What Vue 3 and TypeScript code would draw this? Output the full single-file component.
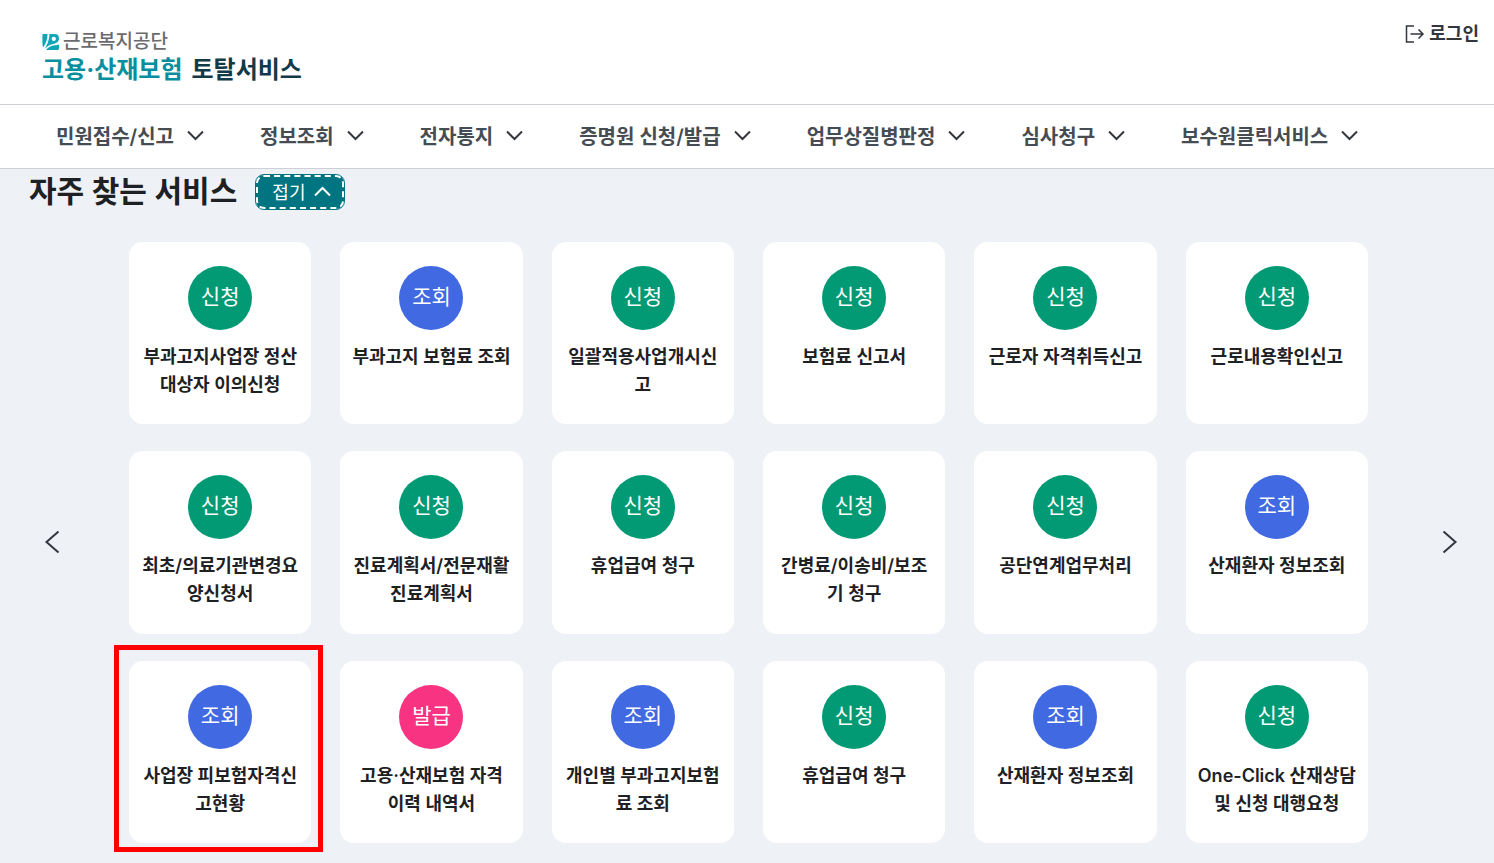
<script setup lang="ts">
import { ref } from 'vue'

type Kind = 'apply' | 'view' | 'issue'

interface Service {
  kind: Kind
  lines: string[]
  marked?: boolean
}

const kindLabels: Record<Kind, string> = { apply: '신청', view: '조회', issue: '발급' }

const menus: string[] = [
  '민원접수/신고',
  '정보조회',
  '전자통지',
  '증명원 신청/발급',
  '업무상질병판정',
  '심사청구',
  '보수원클릭서비스',
]

const services: Service[] = [
  { kind: 'apply', lines: ['부과고지사업장 정산', '대상자 이의신청'] },
  { kind: 'view', lines: ['부과고지 보험료 조회'] },
  { kind: 'apply', lines: ['일괄적용사업개시신', '고'] },
  { kind: 'apply', lines: ['보험료 신고서'] },
  { kind: 'apply', lines: ['근로자 자격취득신고'] },
  { kind: 'apply', lines: ['근로내용확인신고'] },
  { kind: 'apply', lines: ['최초/의료기관변경요', '양신청서'] },
  { kind: 'apply', lines: ['진료계획서/전문재활', '진료계획서'] },
  { kind: 'apply', lines: ['휴업급여 청구'] },
  { kind: 'apply', lines: ['간병료/이송비/보조', '기 청구'] },
  { kind: 'apply', lines: ['공단연계업무처리'] },
  { kind: 'view', lines: ['산재환자 정보조회'] },
  { kind: 'view', lines: ['사업장 피보험자격신', '고현황'], marked: true },
  { kind: 'issue', lines: ['고용·산재보험 자격', '이력 내역서'] },
  { kind: 'view', lines: ['개인별 부과고지보험', '료 조회'] },
  { kind: 'apply', lines: ['휴업급여 청구'] },
  { kind: 'view', lines: ['산재환자 정보조회'] },
  { kind: 'apply', lines: ['One-Click 산재상담', '및 신청 대행요청'] },
]

const open = ref(true)
</script>

<template>
  <div class="page">
    <header class="header">
      <a class="logo" href="#">
        <span class="agency">
          <svg class="mark" viewBox="0 0 18 18" aria-hidden="true">
            <path d="M.5 1H5.500C5.500 6 4 10.500 1 14.500C.3 12 .3 5 .5 1z" />
            <path fill-rule="evenodd" d="M7.500 1H13c2.800 0 4 2 4 4.300c0 3.500-2.500 5.200-6 5.700c-3.300.6-6 2.300-8.500 5C5.500 11.500 7.300 7 7.500 1zM11.800 3.800a2.100 2.100 0 1 0 .01 0z" />
            <path d="M4 17c2.500-3 5.500-4.500 8.500-4.700c2 0 3.500-.3 4.500-.8V15c0 1.500-.5 2-2 2z" />
          </svg>
          <span>근로복지공단</span>
        </span>
        <span class="brand">
          <span class="brand-main">고용·산재보험</span>
          <span>토탈서비스</span>
        </span>
      </a>
      <a class="login" href="#">
        <svg class="login-icon" viewBox="0 0 20 18" aria-hidden="true">
          <path d="M9 1H1.500v16H9M5.500 9H18M13.500 4.500L18 9l-4.500 4.500" />
        </svg>
        로그인
      </a>
    </header>

    <nav class="nav" aria-label="주 메뉴">
      <button v-for="menu in menus" :key="menu" class="menu" type="button">
        {{ menu }}
        <svg class="chevron" viewBox="0 0 17 11" aria-hidden="true"><path d="M1 1.500l7.500 7.500L16 1.500" /></svg>
      </button>
    </nav>

    <main class="main">
      <div class="heading">
        <h1 class="title">자주 찾는 서비스</h1>
        <button class="toggle" type="button" :aria-expanded="open" @click="open = !open">
          {{ open ? '접기' : '펼치기' }}
          <svg class="chevron" :class="{ down: !open }" viewBox="0 0 17 11" aria-hidden="true"><path d="M1 9.500L8.500 2L16 9.500" /></svg>
        </button>
      </div>

      <div v-if="open" class="carousel">
        <button class="arrow" type="button" aria-label="이전">
          <svg viewBox="0 0 16 24" aria-hidden="true"><path d="M14.500 1.500L2.500 12l12 10.500" /></svg>
        </button>
        <ul class="grid">
          <li v-for="(service, i) in services" :key="i" class="cell">
            <a class="card" href="#">
              <span class="badge" :class="service.kind">{{ kindLabels[service.kind] }}</span>
              <span class="name">
                <span v-for="line in service.lines" :key="line" class="line">{{ line }}</span>
              </span>
            </a>
            <span v-if="service.marked" class="marker"></span>
          </li>
        </ul>
        <button class="arrow" type="button" aria-label="다음">
          <svg viewBox="0 0 16 24" aria-hidden="true"><path d="M1.500 1.500L13.500 12L1.500 22.500" /></svg>
        </button>
      </div>
    </main>
  </div>
</template>

<style>
body {
  margin: 0;
  background: #eef1f6;
}
</style>

<style scoped>
.page {
  min-height: 100vh;
  box-sizing: border-box;
  font-family: Inter, "Noto Sans CJK KR", sans-serif;
  color: #1e2124;
}

a {
  color: inherit;
  text-decoration: none;
}

button {
  font: inherit;
  color: inherit;
  background: none;
  border: 0;
  padding: 0;
  cursor: pointer;
}

svg {
  display: block;
  flex: none;
}

.header {
  display: flex;
  justify-content: space-between;
  align-items: flex-start;
  height: 104px;
  box-sizing: border-box;
  padding: 21px 15px 0 42px;
  background: #fff;
}

.logo {
  display: flex;
  flex-direction: column;
  padding-top: 8px;
}

.agency {
  display: flex;
  align-items: center;
  gap: 3px;
  font-size: 19px;
  line-height: 26px;
  font-weight: 500;
  color: #6b6b6e;
}

.mark {
  width: 18px;
  height: 18px;
  fill: #12a5b5;
}

.brand {
  display: flex;
  gap: 9px;
  font-size: 24px;
  line-height: 30px;
  font-weight: 700;
  color: #123a47;
}

.brand-main {
  color: #088e9e;
}

.login {
  display: flex;
  align-items: center;
  gap: 4px;
  font-size: 18px;
  line-height: 26px;
  font-weight: 600;
  color: #33363d;
}

.login-icon {
  width: 20px;
  height: 18px;
}

.login-icon path,
.chevron path,
.arrow path {
  fill: none;
  stroke: #33363d;
  stroke-width: 2;
}

.login-icon path {
  stroke-width: 1.5;
}

.nav {
  display: flex;
  gap: 56px;
  height: 65px;
  box-sizing: border-box;
  padding: 0 0 2px 56px;
  background: #fff;
  border-top: 1px solid #cdd1d5;
  border-bottom: 1px solid #cdd1d5;
}

.menu {
  display: flex;
  align-items: center;
  gap: 13px;
  font-size: 20px;
  font-weight: 600;
  white-space: nowrap;
  color: #464c53;
}

.chevron {
  width: 17px;
  height: 11px;
}

.chevron.down {
  transform: rotate(180deg);
}

.heading {
  display: flex;
  align-items: center;
  gap: 19px;
  padding: 1px 29px 0;
}

.title {
  margin: 0;
  padding-bottom: 2px;
  font-size: 30px;
  line-height: 42px;
  font-weight: 600;
}

.toggle {
  display: flex;
  align-items: center;
  gap: 9px;
  height: 34px;
  padding: 0 11px 2px 14px;
  border: 2px dashed #fff;
  border-radius: 8px;
  outline: 1px solid #007582;
  background: #007582;
  font-size: 18px;
  color: #fff;
}

.toggle .chevron path {
  stroke: #fff;
}

.carousel {
  display: flex;
  align-items: center;
  padding: 28px 28px 20px 36px;
}

.arrow {
  display: flex;
  justify-content: center;
  flex: none;
  width: 32px;
  padding: 8px 0 10px;
}

.arrow svg {
  width: 16px;
  height: 24px;
}

.grid {
  flex: 1;
  display: grid;
  grid-template-columns: repeat(6, minmax(0, 1fr));
  gap: 27px 29px;
  margin: 0 66px 0 61px;
  padding: 0;
  list-style: none;
}

.cell {
  position: relative;
}

.card {
  display: flex;
  flex-direction: column;
  align-items: center;
  gap: 13px;
  aspect-ratio: 1;
  box-sizing: border-box;
  padding-top: 24px;
  border-radius: 14px;
  background: #fff;
}

.badge {
  width: 64px;
  padding-bottom: 2px;
  border-radius: 50%;
  font-size: 21px;
  line-height: 62px;
  text-align: center;
  color: #fff;
}

.badge.apply {
  background: #029a74;
}

.badge.view {
  background: #4169e1;
}

.badge.issue {
  background: #f73382;
}

.name {
  font-size: 18px;
  line-height: 28px;
  font-weight: 600;
  text-align: center;
  white-space: nowrap;
}

.line {
  display: block;
}

.marker {
  position: absolute;
  inset: -16px -12px -9px -15px;
  border: 5px solid #f00;
  pointer-events: none;
}
</style>
